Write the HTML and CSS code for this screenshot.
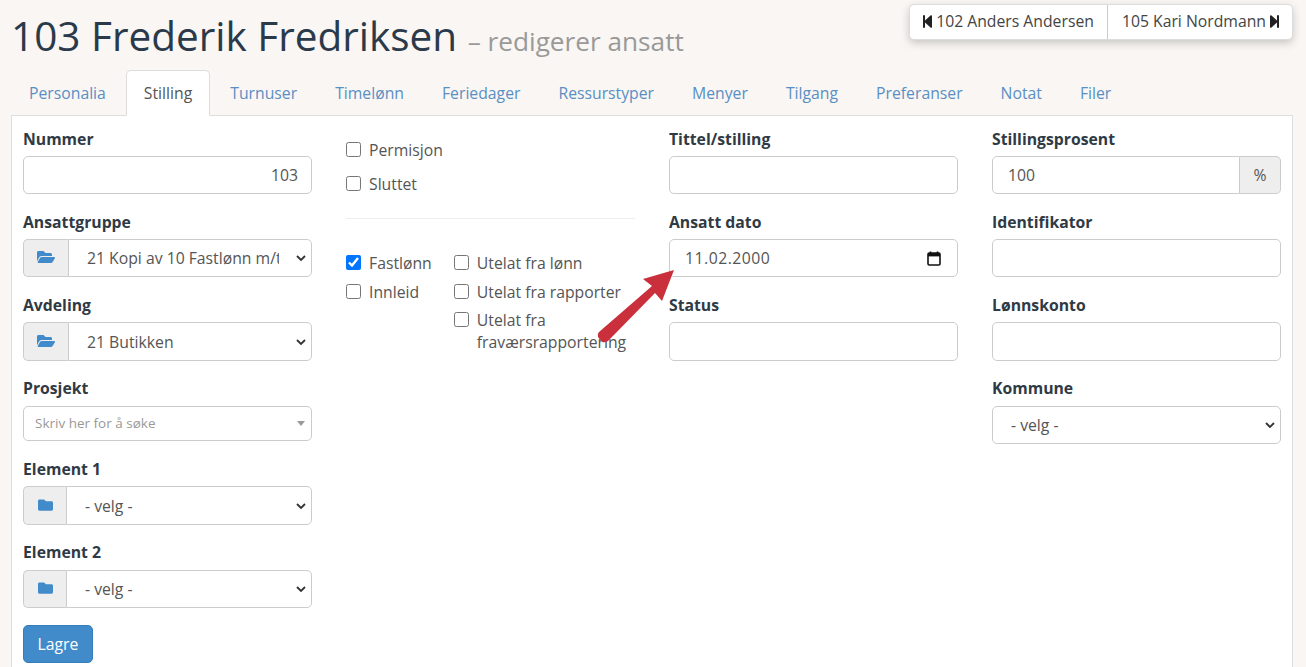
FILE: index.html
```html
<!DOCTYPE html>
<html lang="nb">
<head>
    <meta charset="UTF-8">
    <title>103 Frederik Fredriksen</title>
    <link rel="stylesheet" href="styles.css">
</head>
<body>
    <div class="pager">
        <a class="pager-link">
            <svg class="pager-icon" viewBox="64 32 320 448"><path d="M64 468V44c0-6.6 5.4-12 12-12h48c6.6 0 12 5.4 12 12v176.4l195.5-181C352.1 22.3 384 36.6 384 64v384c0 27.4-31.9 41.7-52.5 24.6L136 292.7V468c0 6.6-5.4 12-12 12H76c-6.6 0-12-5.4-12-12z"/></svg>
            102 Anders Andersen
        </a>
        <a class="pager-link">
            105 Kari Nordmann
            <svg class="pager-icon" viewBox="64 32 320 448"><path d="M384 44v424c0 6.6-5.4 12-12 12h-48c-6.6 0-12-5.4-12-12V291.6l-195.5 181C95.9 489.7 64 475.4 64 448V64c0-27.4 31.9-41.7 52.5-24.6L312 219.3V44c0-6.6 5.4-12 12-12h48c6.6 0 12 5.4 12 12z"/></svg>
        </a>
    </div>

    <h1 class="title">103 Frederik Fredriksen <small>– redigerer ansatt</small></h1>

    <ul class="tabs">
        <li><a>Personalia</a></li>
        <li class="active"><a>Stilling</a></li>
        <li><a>Turnuser</a></li>
        <li><a>Timelønn</a></li>
        <li><a>Feriedager</a></li>
        <li><a>Ressurstyper</a></li>
        <li><a>Menyer</a></li>
        <li><a>Tilgang</a></li>
        <li><a>Preferanser</a></li>
        <li><a>Notat</a></li>
        <li><a>Filer</a></li>
    </ul>

    <form class="panel">
        <div class="col">
            <div class="field">
                <label>Nummer</label>
                <input class="control right" type="text" value="103">
            </div>
            <div class="field">
                <label>Ansattgruppe</label>
                <div class="group">
                    <span class="addon wide">
                        <svg class="folder" viewBox="0 0 576 512"><path d="M572.694 292.093L500.27 416.248A63.997 63.997 0 0 1 444.989 448H45.025c-18.523 0-30.064-20.093-20.731-36.093l72.424-124.155A64 64 0 0 1 152 256h399.964c18.523 0 30.064 20.093 20.73 36.093zM152 224h328v-48c0-26.51-21.49-48-48-48H272l-64-64H48C21.49 64 0 85.49 0 112v278.046l69.077-118.418C86.214 242.25 117.989 224 152 224z"/></svg>
                    </span>
                    <select class="control"><option>21 Kopi av 10 Fastlønn m/time</option></select>
                </div>
            </div>
            <div class="field">
                <label>Avdeling</label>
                <div class="group">
                    <span class="addon wide">
                        <svg class="folder" viewBox="0 0 576 512"><path d="M572.694 292.093L500.27 416.248A63.997 63.997 0 0 1 444.989 448H45.025c-18.523 0-30.064-20.093-20.731-36.093l72.424-124.155A64 64 0 0 1 152 256h399.964c18.523 0 30.064 20.093 20.73 36.093zM152 224h328v-48c0-26.51-21.49-48-48-48H272l-64-64H48C21.49 64 0 85.49 0 112v278.046l69.077-118.418C86.214 242.25 117.989 224 152 224z"/></svg>
                    </span>
                    <select class="control"><option>21 Butikken</option></select>
                </div>
            </div>
            <div class="field">
                <label>Prosjekt</label>
                <div class="combo">
                    <span>Skriv her for å søke</span>
                    <i class="caret"></i>
                </div>
            </div>
            <div class="field">
                <label>Element 1</label>
                <div class="group">
                    <span class="addon">
                        <svg class="folder closed" viewBox="0 0 512 512"><path d="M464 128H272l-64-64H48C21.49 64 0 85.49 0 112v288c0 26.51 21.49 48 48 48h416c26.51 0 48-21.49 48-48V176c0-26.51-21.49-48-48-48z"/></svg>
                    </span>
                    <select class="control"><option>- velg -</option></select>
                </div>
            </div>
            <div class="field">
                <label>Element 2</label>
                <div class="group">
                    <span class="addon">
                        <svg class="folder closed" viewBox="0 0 512 512"><path d="M464 128H272l-64-64H48C21.49 64 0 85.49 0 112v288c0 26.51 21.49 48 48 48h416c26.51 0 48-21.49 48-48V176c0-26.51-21.49-48-48-48z"/></svg>
                    </span>
                    <select class="control"><option>- velg -</option></select>
                </div>
            </div>
            <button class="save" type="button">Lagre</button>
        </div>

        <div class="col">
            <div class="status-checks">
                <label class="check"><input type="checkbox">Permisjon</label>
                <label class="check"><input type="checkbox">Sluttet</label>
            </div>
            <hr class="divider">
            <div class="check-columns">
                <div class="check-col">
                    <label class="check"><input type="checkbox" checked>Fastlønn</label>
                    <label class="check"><input type="checkbox">Innleid</label>
                </div>
                <div class="check-col">
                    <label class="check"><input type="checkbox">Utelat fra lønn</label>
                    <label class="check"><input type="checkbox">Utelat fra rapporter</label>
                    <label class="check"><input type="checkbox"><span>Utelat fra fraværsrapportering</span></label>
                </div>
            </div>
        </div>

        <div class="col">
            <div class="field">
                <label>Tittel/stilling</label>
                <input class="control" type="text">
            </div>
            <div class="field">
                <label>Ansatt dato</label>
                <div class="control date">
                    <span>11.02.2000</span>
                    <svg class="calendar" viewBox="0 0 14 15"><path d="M3.5 0.5v2M10.5 0.5v2" stroke="#111" stroke-width="1.6" fill="none"/><rect x="1" y="2" width="12" height="12" rx="1.2" fill="none" stroke="#111" stroke-width="1.6"/><rect x="1" y="2" width="12" height="3.4" fill="#111"/></svg>
                </div>
            </div>
            <div class="field">
                <label>Status</label>
                <input class="control" type="text">
            </div>
        </div>

        <div class="col">
            <div class="field">
                <label>Stillingsprosent</label>
                <div class="group">
                    <input class="control" type="text" value="100">
                    <span class="addon percent">%</span>
                </div>
            </div>
            <div class="field">
                <label>Identifikator</label>
                <input class="control" type="text">
            </div>
            <div class="field">
                <label>Lønnskonto</label>
                <input class="control" type="text">
            </div>
            <div class="field">
                <label>Kommune</label>
                <select class="control"><option>- velg -</option></select>
            </div>
        </div>
    </form>

    <svg class="arrow" viewBox="0 0 90 80">
        <path d="M7 77 L3 72 Q2 69 4 67 L57 21 L48 14 L79 5 L67 36 L60 28 L13 76 Q10 78 7 77 Z"/>
    </svg>
</body>
</html>
```

FILE: styles.css
```css
* {
    box-sizing: border-box;
}
body {
    margin: 0;
    height: 667px;
    overflow: hidden;
    position: relative;
    padding: 0 13px 0 11px;
    font-family: "Open Sans", sans-serif;
    font-size: 15.75px;
    color: #555;
    background-color: #f9f6f3;
}
.title {
    margin: 0;
    height: 70px;
    padding-top: 9px;
    font-size: 40.5px;
    line-height: 54px;
    font-weight: 400;
    color: #2b3a4a;
}
.title small {
    font-size: 26.2px;
    color: #999;
}
.pager {
    position: absolute;
    top: 4px;
    right: 13px;
    display: flex;
    background-color: #fff;
    border: 1px solid #ddd;
    border-radius: 5px;
    box-shadow: 0 3px 8px rgba(0,0,0,0.2);
}
.pager-link {
    display: flex;
    align-items: center;
    gap: 4px;
    height: 34px;
    padding: 0 13px 2px;
    color: #444;
}
.pager-link + .pager-link {
    padding-left: 14px;
    border-left: 1px solid #ccc;
}
.pager-icon {
    width: 9px;
    height: 13px;
    fill: #222;
}
.tabs {
    display: flex;
    list-style: none;
    margin: 0;
    padding: 0;
    height: 46px;
    position: relative;
    z-index: 1;
}
.tabs li {
    margin-right: 2px;
}
.tabs a {
    display: block;
    height: 46px;
    padding: 11px 17px;
    line-height: 22px;
    color: #5a8fc4;
    border: 1px solid transparent;
    border-radius: 5px 5px 0 0;
}
.tabs .active a {
    color: #555;
    background-color: #fff;
    border-color: #ddd;
    border-bottom-color: #fff;
}
.panel {
    display: grid;
    grid-template-columns: repeat(4, 289px);
    column-gap: 34px;
    height: 600px;
    margin-top: -1px;
    padding: 11.55px 11px;
    background-color: #fff;
    border: 1px solid #ddd;
}
.field {
    margin-bottom: 16.7px;
}
.field > label {
    display: block;
    margin-bottom: 6.4px;
    font-size: 15.75px;
    line-height: 22px;
    font-weight: 700;
    color: #2f3a45;
}
.control {
    display: block;
    width: 100%;
    height: 38.2px;
    padding: 0 15px;
    font-family: inherit;
    font-size: 15.75px;
    color: #555;
    background-color: #fff;
    border: 1px solid #ccc;
    border-radius: 5px;
}
.right {
    text-align: right;
    padding-right: 13px;
}
select.control {
    padding-left: 18px;
    padding-right: 32px;
    appearance: none;
    background-image: url("data:image/svg+xml,%3Csvg xmlns='http://www.w3.org/2000/svg' width='12' height='8' viewBox='0 0 12 8'%3E%3Cpath d='M2 2l4 4 4-4' fill='none' stroke='%23333' stroke-width='1.8'/%3E%3C/svg%3E");
    background-repeat: no-repeat;
    background-position: right 4px center;
}
.group {
    display: flex;
}
.group .control {
    flex: 1;
    min-width: 0;
    border-radius: 0 5px 5px 0;
}
.addon {
    display: flex;
    align-items: center;
    justify-content: center;
    flex: none;
    width: 43px;
    background-color: #eee;
    border: 1px solid #ccc;
    border-right: none;
    border-radius: 5px 0 0 5px;
}
.addon.wide {
    width: 45px;
}
.addon.percent {
    width: 41px;
    border-left: none;
    border-right: 1px solid #ccc;
    border-radius: 0 5px 5px 0;
}
.group .control:first-child {
    border-radius: 5px 0 0 5px;
}
.folder {
    width: 18px;
    height: 16px;
    margin-bottom: 2px;
    fill: #428bca;
}
.folder.closed {
    width: 15px;
}
.combo {
    display: flex;
    align-items: center;
    justify-content: space-between;
    height: 35.6px;
    padding: 0 6px 1px 11px;
    font-size: 13.5px;
    color: #999;
    background-color: #fff;
    border: 1px solid #ccc;
    border-radius: 5px;
}
.caret {
    border-top: 5px solid #999;
    border-left: 4px solid transparent;
    border-right: 4px solid transparent;
}
.save {
    display: block;
    width: 70px;
    height: 38.2px;
    font-family: inherit;
    font-size: 15.75px;
    color: #fff;
    background-color: #428bca;
    border: 1px solid #357ebd;
    border-radius: 5px;
}
.check {
    display: flex;
    align-items: flex-start;
    gap: 8px;
    line-height: 22px;
    color: #555;
}
.check input {
    flex: none;
    width: 15px;
    height: 15px;
    margin: 3px 0 0;
}
.status-checks {
    display: flex;
    flex-direction: column;
    gap: 12px;
    padding-top: 11.45px;
}
.divider {
    margin: 23px 0 33.2px;
    border: none;
    border-top: 1px solid #eee;
}
.check-columns {
    display: flex;
    gap: 22px;
}
.check-col {
    display: flex;
    flex-direction: column;
    gap: 6.5px;
}
.date {
    display: flex;
    align-items: center;
    justify-content: space-between;
    padding-right: 16px;
    letter-spacing: 0.5px;
}
.calendar {
    width: 14px;
    height: 15px;
}
.arrow {
    position: absolute;
    left: 595px;
    top: 265px;
    width: 90px;
    height: 80px;
    fill: #c9303c;
}
```
